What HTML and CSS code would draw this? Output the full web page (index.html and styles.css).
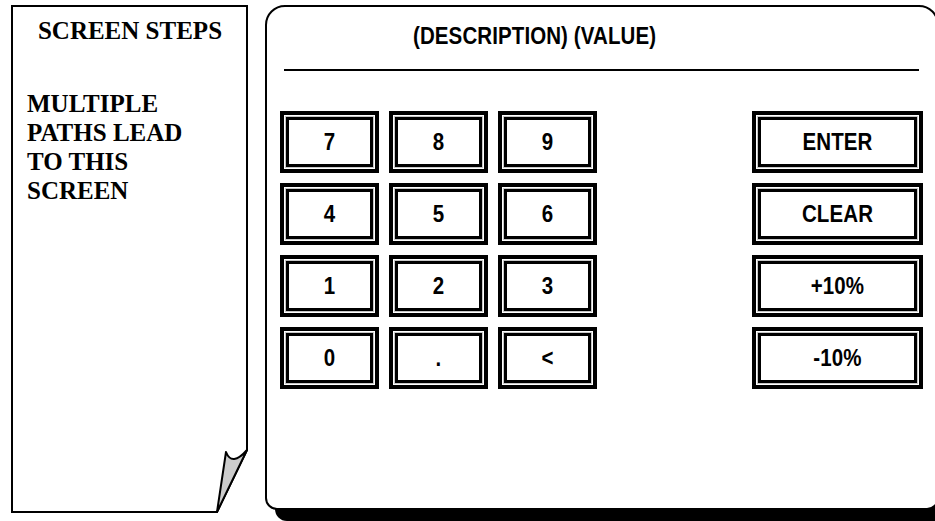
FILE: index.html
```html
<!DOCTYPE html>
<html lang="en">
<head>
<meta charset="utf-8">
<title>Keypad Screen</title>
<link rel="stylesheet" href="styles.css">
</head>
<body>
<div class="page">
  <aside class="steps">
    <svg class="steps-frame" viewBox="0 0 237 508" width="237" height="508" aria-hidden="true">
      <path d="M1,1 H236 V445 L206,507 H1 Z" fill="#fff" stroke="#000" stroke-width="2" stroke-linejoin="miter"/>
      <path d="M236,445 Q221,462 215,447 L206,507 Z" fill="#cccccc" stroke="#000" stroke-width="2" stroke-linejoin="round"/>
    </svg>
    <div class="steps-title">SCREEN STEPS</div>
    <div class="steps-text">MULTIPLE<br>PATHS LEAD<br>TO THIS<br>SCREEN</div>
  </aside>
  <main class="panel">
    <div class="panel-head"><span class="label">(DESCRIPTION) (VALUE)</span></div>
    <div class="rule"></div>
    <div class="pads">
      <div class="keypad">
        <div class="key"><span class="label">7</span></div>
        <div class="key"><span class="label">8</span></div>
        <div class="key"><span class="label">9</span></div>
        <div class="key"><span class="label">4</span></div>
        <div class="key"><span class="label">5</span></div>
        <div class="key"><span class="label">6</span></div>
        <div class="key"><span class="label">1</span></div>
        <div class="key"><span class="label">2</span></div>
        <div class="key"><span class="label">3</span></div>
        <div class="key"><span class="label">0</span></div>
        <div class="key"><span class="label">.</span></div>
        <div class="key"><span class="label">&lt;</span></div>
      </div>
      <div class="actions">
        <div class="key wide"><span class="label">ENTER</span></div>
        <div class="key wide"><span class="label">CLEAR</span></div>
        <div class="key wide"><span class="label">+10%</span></div>
        <div class="key wide"><span class="label">-10%</span></div>
      </div>
    </div>
  </main>
</div>
</body>
</html>
```

FILE: styles.css
```css
html, body {
  margin: 0;
  padding: 0;
  background: #fff;
  overflow: hidden;
}

.page {
  display: flex;
  align-items: flex-start;
  gap: 17px;
  padding: 5px 0 0 11px;
  width: 960px;
  height: 521px;
  box-sizing: border-box;
}

/* Left "screen steps" sheet */
.steps {
  position: relative;
  flex: 0 0 237px;
  height: 508px;
  padding: 12px 0 0 16px;
  box-sizing: border-box;
  font-family: "Liberation Serif", "Times New Roman", serif;
  font-weight: bold;
  font-size: 25px;
  color: #000;
}

.steps-frame {
  position: absolute;
  left: 0;
  top: 0;
  z-index: 0;
}

.steps-title,
.steps-text {
  position: relative;
  z-index: 1;
}

.steps-title {
  line-height: 28.5px;
  text-align: center;
  margin-left: -16px;
  padding-left: 1px;
}

.steps-text {
  margin-top: 43.5px;
  line-height: 29px;
}

/* Main keypad panel */
.panel {
  flex: 0 0 674px;
  height: 505px;
  box-sizing: border-box;
  border: 2px solid #000;
  border-radius: 20px 20px 12px 12px;
  box-shadow: 10px 11px 0 #000;
  background: #fff;
  font-family: "Liberation Sans", Arial, sans-serif;
  font-weight: bold;
  font-size: 20.5px;
  color: #000;
}

.label {
  display: inline-block;
  transform: scaleY(1.14);
  letter-spacing: 0.1px;
}

.panel-head {
  margin-top: 17px;
  height: 24px;
  line-height: 24px;
  padding-left: 146px;
  white-space: nowrap;
}

.rule {
  height: 2px;
  background: #000;
  margin: 21px 18px 0 17px;
}

.pads {
  display: flex;
  justify-content: space-between;
  margin-top: 40px;
  padding: 0 14px 0 13px;
}

.keypad {
  display: grid;
  grid-template-columns: repeat(3, 99px);
  grid-auto-rows: 62px;
  column-gap: 10px;
  row-gap: 10px;
}

.actions {
  display: grid;
  grid-template-columns: 171px;
  grid-auto-rows: 62px;
  row-gap: 10px;
}

.key {
  box-sizing: border-box;
  border: 4px solid #000;
  box-shadow: inset 0 0 0 1px #fff, inset 0 0 0 2px #c8c8c8, inset 0 0 0 5px #000;
  display: flex;
  align-items: center;
  justify-content: center;
  line-height: 24px;
}
```
